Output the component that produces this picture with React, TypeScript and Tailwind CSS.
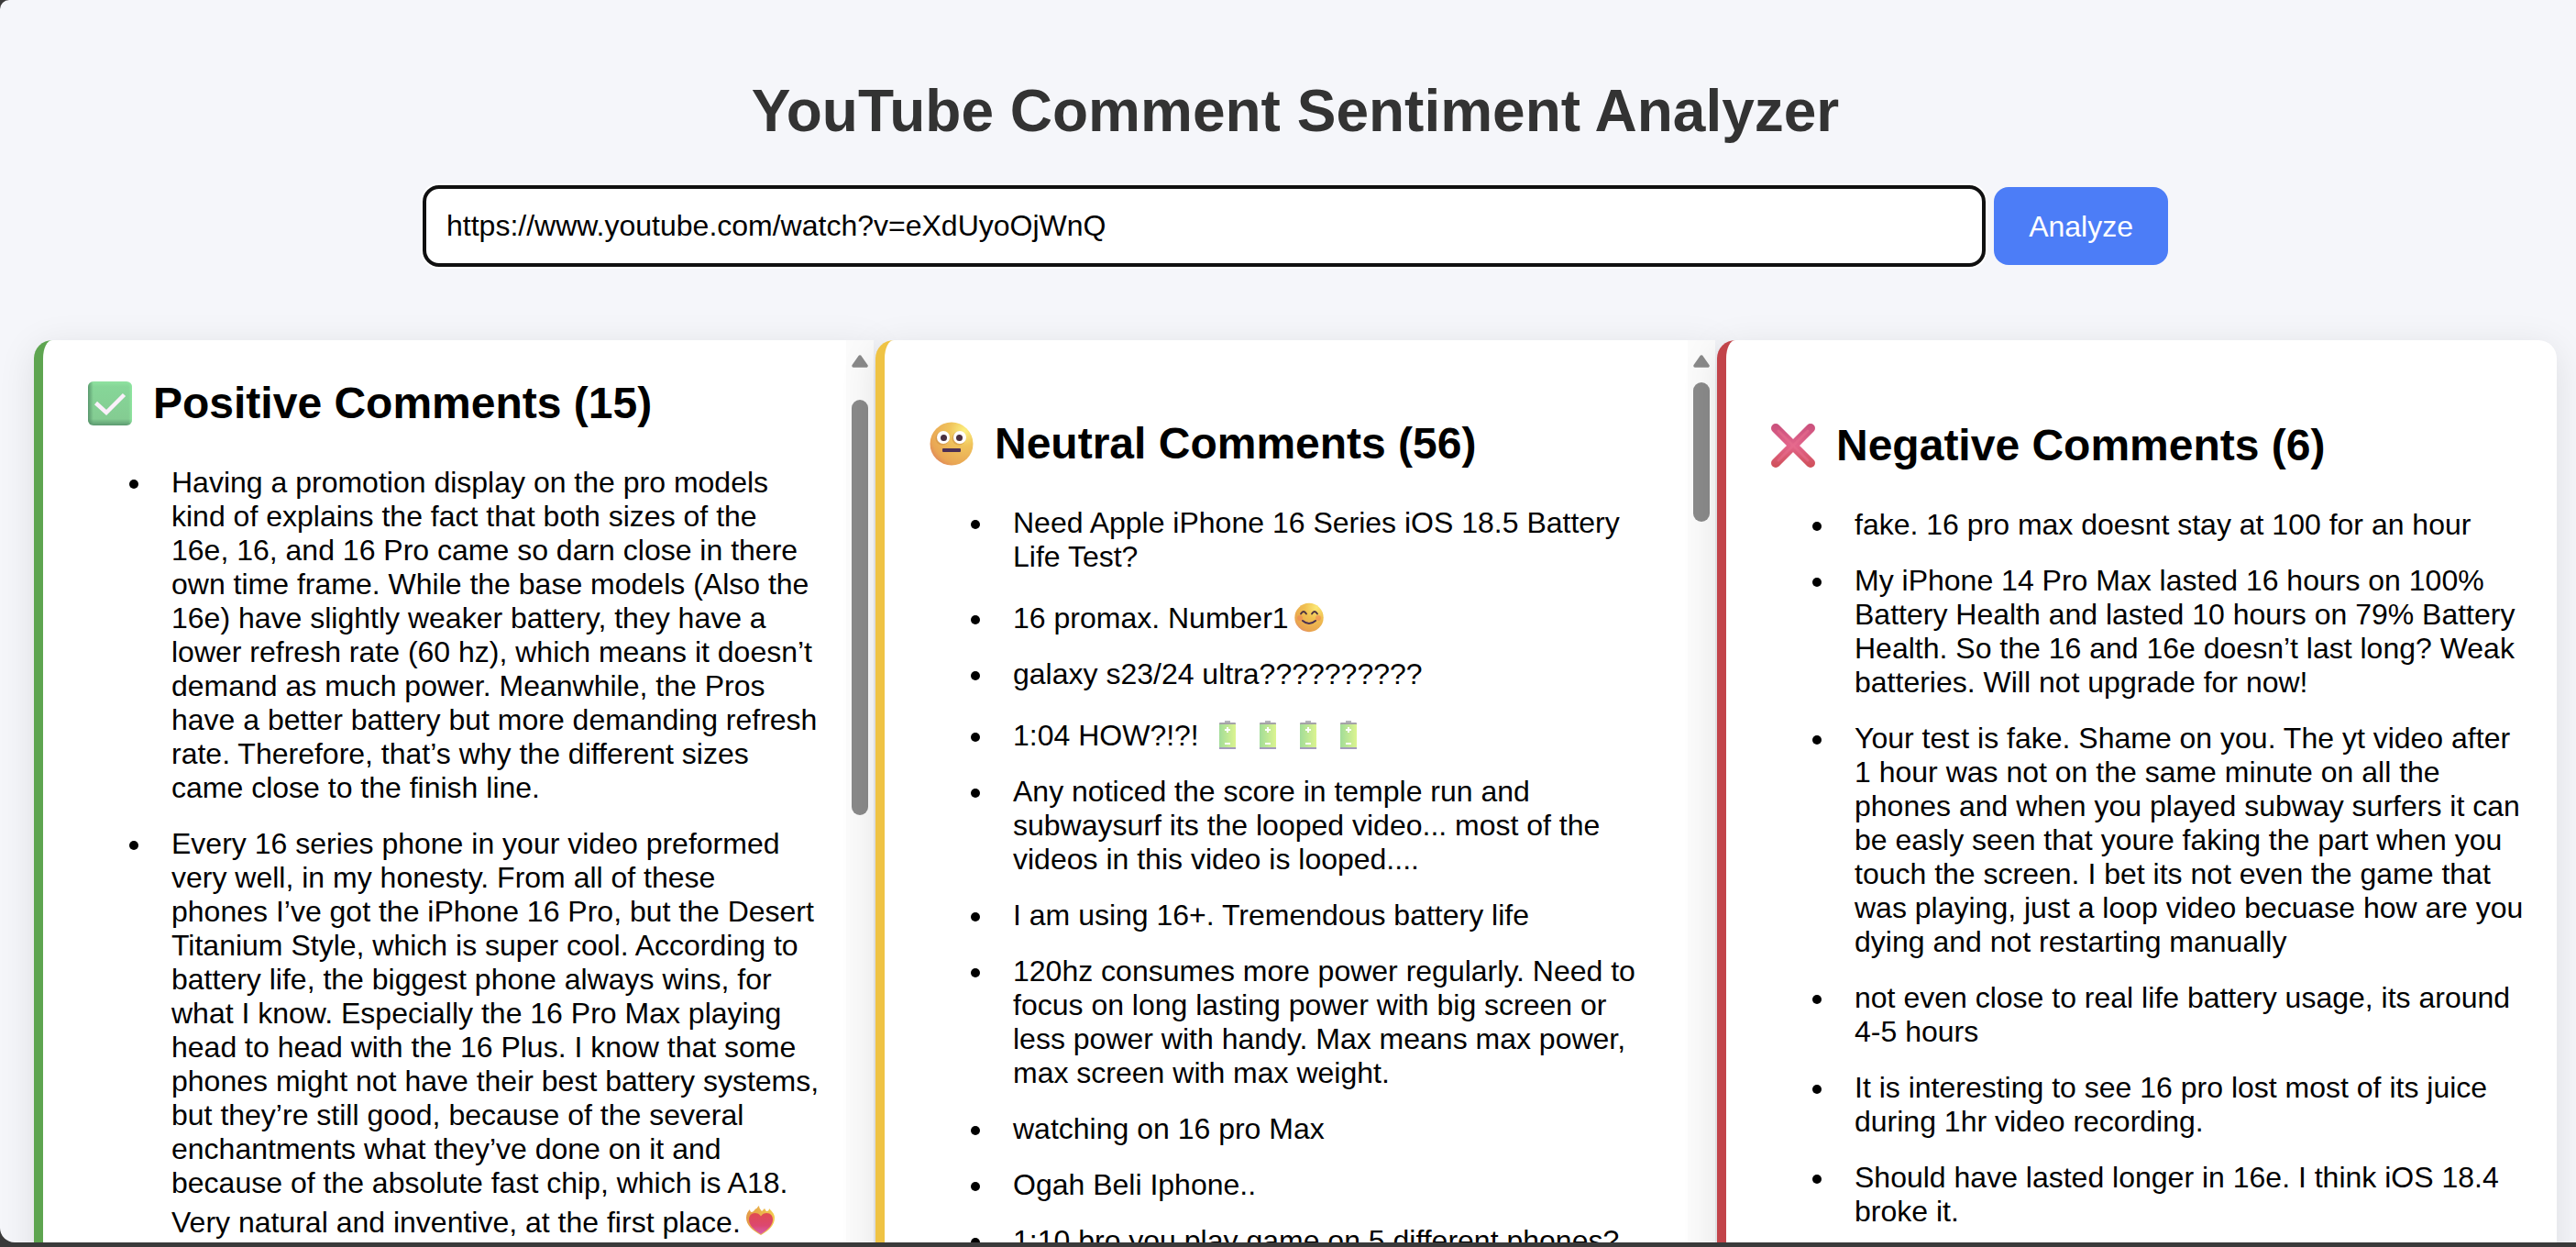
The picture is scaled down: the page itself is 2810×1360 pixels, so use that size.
import React, { useState } from "react";

const EMOJI_CELL = "inline-block w-[44px] h-[41px] align-[-6px]";

function CheckIcon() {
  return (
    <svg viewBox="0 0 48 48" className="h-12 w-12" aria-hidden="true">
      <defs>
        <linearGradient id="check-v" x1="0" y1="0" x2="0" y2="1">
          <stop offset="0" stopColor="#8fe3a0" />
          <stop offset="0.12" stopColor="#86d698" />
          <stop offset="0.85" stopColor="#84cc92" />
          <stop offset="1" stopColor="#5c9a70" />
        </linearGradient>
        <linearGradient id="check-h" x1="0" y1="0" x2="1" y2="0">
          <stop offset="0" stopColor="#4f8a64" stopOpacity="0.8" />
          <stop offset="0.12" stopColor="#4f8a64" stopOpacity="0" />
          <stop offset="0.92" stopColor="#93efa4" stopOpacity="0" />
          <stop offset="1" stopColor="#93efa4" stopOpacity="0.7" />
        </linearGradient>
      </defs>
      <rect width="48" height="48" rx="6" fill="url(#check-v)" />
      <rect width="48" height="48" rx="6" fill="url(#check-h)" />
      <path d="M8.5 23.5 20 34 39.5 14.5" fill="none" stroke="#fbf0fb" strokeWidth="4.5" />
    </svg>
  );
}

function NeutralIcon() {
  return (
    <svg viewBox="0 0 48 48" className="h-12 w-12" aria-hidden="true">
      <defs>
        <radialGradient id="face" cx="0.8" cy="0.2" r="1">
          <stop offset="0" stopColor="#fcf080" />
          <stop offset="0.35" stopColor="#f0c45c" />
          <stop offset="0.8" stopColor="#e9a654" />
          <stop offset="1" stopColor="#dc7c5c" />
        </radialGradient>
      </defs>
      <circle cx="24" cy="24" r="23.5" fill="url(#face)" />
      <circle cx="14" cy="18" r="7.5" fill="#c98a44" opacity="0.5" />
      <circle cx="32" cy="18" r="7.5" fill="#c98a44" opacity="0.5" />
      <circle cx="15" cy="17" r="7" fill="#fff" />
      <circle cx="33" cy="17" r="7" fill="#fff" />
      <circle cx="15.5" cy="17.5" r="3.5" fill="#4a3040" />
      <circle cx="32.5" cy="17.5" r="3.5" fill="#4a3040" />
      <rect x="14" y="29" width="20" height="4" rx="1" fill="#4b2f55" />
    </svg>
  );
}

function CrossIcon() {
  return (
    <svg viewBox="0 0 48 48" className="h-12 w-12" aria-hidden="true">
      <defs>
        <linearGradient id="cross" x1="0" y1="0" x2="0" y2="48" gradientUnits="userSpaceOnUse">
          <stop offset="0" stopColor="#c9507c" />
          <stop offset="0.5" stopColor="#e2648a" />
          <stop offset="1" stopColor="#cf4f58" />
        </linearGradient>
      </defs>
      <path d="M5 5 43 43M43 5 5 43" stroke="url(#cross)" strokeWidth="10" strokeLinecap="round" />
      <path d="M8 8 40 40M40 8 8 40" stroke="#ea7090" strokeOpacity="0.5" strokeWidth="3" strokeLinecap="round" />
    </svg>
  );
}

function Smile() {
  return (
    <svg viewBox="0 1 44 41" className={EMOJI_CELL} role="img" aria-label="smiling face">
      <defs>
        <radialGradient id="smile" cx="0.75" cy="0.15" r="1">
          <stop offset="0" stopColor="#fbe876" />
          <stop offset="0.4" stopColor="#f0c050" />
          <stop offset="0.85" stopColor="#e9a44f" />
          <stop offset="1" stopColor="#dd8080" />
        </radialGradient>
      </defs>
      <circle cx="22" cy="24.5" r="15.7" fill="url(#smile)" />
      <circle cx="12" cy="25" r="3" fill="#ee7a55" opacity="0.5" />
      <circle cx="32" cy="25" r="3" fill="#ee7a55" opacity="0.5" />
      <path d="M13 20.5q3-5 6 0M25 20.5q3-5 6 0" fill="none" stroke="#4a3040" strokeWidth="1.8" strokeLinecap="round" />
      <path d="M15 28q7 6 14 0" fill="none" stroke="#4a3050" strokeWidth="2" strokeLinecap="round" />
    </svg>
  );
}

function Battery() {
  return (
    <svg viewBox="0 1 44 41" className={EMOJI_CELL} role="img" aria-label="battery">
      <defs>
        <linearGradient id="cell" x1="0" y1="0" x2="1" y2="0">
          <stop offset="0" stopColor="#a2dc98" />
          <stop offset="1" stopColor="#dcf490" />
        </linearGradient>
      </defs>
      <rect x="19" y="9" width="6" height="3" fill="#b4b4ba" />
      <rect x="13" y="11" width="18" height="3" rx="1" fill="#a4a2a8" />
      <rect x="13" y="13" width="18" height="25" fill="url(#cell)" />
      <rect x="13" y="38" width="18" height="2" fill="#a49cbc" />
      <path d="M19 19h6M22 16v6M19 34h6" stroke="#fff" strokeWidth="2" />
    </svg>
  );
}

function FireHeart() {
  return (
    <svg viewBox="0 1 44 41" className={EMOJI_CELL} role="img" aria-label="heart on fire">
      <defs>
        <linearGradient id="flame" x1="0" y1="0" x2="1" y2="0">
          <stop offset="0" stopColor="#e39a48" />
          <stop offset="1" stopColor="#f2cc50" />
        </linearGradient>
        <linearGradient id="heart" x1="0" y1="0" x2="0" y2="1">
          <stop offset="0" stopColor="#e04a50" />
          <stop offset="0.6" stopColor="#dc4870" />
          <stop offset="1" stopColor="#d860b0" />
        </linearGradient>
      </defs>
      <path
        d="M22 39C13 34 6 28 6 20c0-4 2-7 4-9 0 2 1 3 2 3 2 0 3-3 5-4 1 0 1-2 3-3 0 3 2 4 3 6l3-3c1 1 1 2 2 3 2 0 3-1 3-3 3 3 6 6 6 10 0 8-6 14-15 19Z"
        fill="url(#flame)"
      />
      <path
        d="M22 38C14 33 9 28 9 22c0-4 2.5-7 6.5-7 3 0 5 1 6.5 3.5C23.5 16 25.5 15 28.5 15c4 0 6.5 3 6.5 7 0 6-5 11-13 16Z"
        fill="url(#heart)"
      />
    </svg>
  );
}

const positive: React.ReactNode[] = [
  <>
    Having a promotion display on the pro models kind of explains the fact that both sizes of the
    <br />
    16e, 16, and 16 Pro came so darn close in there own time frame. While the base models (Also the 16e) have slightly
    weaker battery, they have a lower refresh rate (60 hz), which means it doesn’t demand as much power. Meanwhile, the
    Pros have a better battery but more demanding refresh rate. Therefore, that’s why the different sizes came close to
    the finish line.
  </>,
  <>
    Every 16 series phone in your video preformed very well, in my honesty. From all of these
    <br />
    phones I’ve got the iPhone 16 Pro, but the Desert Titanium Style, which is super cool. According to battery life,
    the biggest phone always wins, for what I know. Especially the 16 Pro Max playing head to head with the 16 Plus. I
    know that some phones might not have their best battery systems, but they’re still good, because of the several
    enchantments what they’ve done on it and because of the absolute fast chip, which is A18. Very natural and
    inventive, at the first place.
    <FireHeart />
  </>,
];

const neutral: React.ReactNode[] = [
  "Need Apple iPhone 16 Series iOS 18.5 Battery Life Test?",
  <>
    16 promax. Number1
    <Smile />
  </>,
  "galaxy s23/24 ultra??????????",
  <>
    1:04 HOW?!?! <Battery />
    <Battery />
    <Battery />
    <Battery />
  </>,
  "Any noticed the score in temple run and subwaysurf its the looped video... most of the videos in this video is looped....",
  "I am using 16+. Tremendous battery life",
  "120hz consumes more power regularly. Need to focus on long lasting power with big screen or less power with handy. Max means max power, max screen with max weight.",
  "watching on 16 pro Max",
  "Ogah Beli Iphone..",
  "1:10 bro you play game on 5 different phones?",
];

const negative: React.ReactNode[] = [
  "fake. 16 pro max doesnt stay at 100 for an hour",
  "My iPhone 14 Pro Max lasted 16 hours on 100% Battery Health and lasted 10 hours on 79% Battery Health. So the 16 and 16e doesn’t last long? Weak batteries. Will not upgrade for now!",
  "Your test is fake. Shame on you. The yt video after 1 hour was not on the same minute on all the phones and when you played subway surfers it can be easly seen that youre faking the part when you touch the screen. I bet its not even the game that was playing, just a loop video becuase how are you dying and not restarting manually",
  "not even close to real life battery usage, its around 4-5 hours",
  "It is interesting to see 16 pro lost most of its juice during 1hr video recording.",
  "Should have lasted longer in 16e. I think iOS 18.4 broke it.",
];

function ScrollBar({ thumb }: { thumb: string }) {
  return (
    <div className="flex w-[30px] shrink-0 flex-col items-center bg-[#fbfbfb] pt-4" aria-hidden="true">
      <svg viewBox="0 0 18 14" className="h-[14px] w-[18px] shrink-0">
        <path d="M9 2 16 12H2Z" fill="#8a8a8a" stroke="#8a8a8a" strokeWidth="3.5" strokeLinejoin="round" />
      </svg>
      <div className={`w-[18px] shrink-0 rounded-full bg-[#8a8a8a] ${thumb}`} />
    </div>
  );
}

interface CardProps {
  title: string;
  icon: React.ReactNode;
  items: React.ReactNode[];
  frame: string;
  inset: string;
  thumb?: string;
}

function CommentCard({ title, icon, items, frame, inset, thumb }: CardProps) {
  return (
    <section
      className={`flex min-h-0 overflow-hidden border-l-[10px] bg-white shadow-[0_8px_40px_rgba(0,0,0,0.1)] ${frame}`}
    >
      <div className={`min-w-0 flex-1 pl-10 ${inset}`}>
        <h2 className="flex items-center text-[48px] leading-[64px] font-bold">
          <span className="mr-3.5 flex w-[66px] justify-center">{icon}</span>
          {title}
        </h2>
        <ul className="mt-9 list-disc space-y-6 pl-20 text-[32px] leading-[37px]">
          {items.map((item, i) => (
            <li key={i} className="pl-5">
              {item}
            </li>
          ))}
        </ul>
      </div>
      {thumb && <ScrollBar thumb={thumb} />}
    </section>
  );
}

export default function App() {
  const [url, setUrl] = useState("https://www.youtube.com/watch?v=eXdUyoOjWnQ");
  return (
    <div className="h-screen bg-[#3a3a3a] pb-[5px] font-['Liberation_Sans',Arial,sans-serif] text-black">
      <main className="flex h-full flex-col overflow-hidden rounded-tl-[10px] rounded-bl-[16px] bg-[#f5f6fa] pr-[21px] pl-[37px]">
        <h1 className="mt-[84px] text-center text-[64px] leading-[74px] font-bold text-[#333]">
          YouTube Comment Sentiment Analyzer
        </h1>
        <form
          className="mx-auto mt-11 flex w-full max-w-[1904px] items-center justify-center gap-[9px]"
          onSubmit={(e) => e.preventDefault()}
        >
          <input
            type="text"
            aria-label="YouTube video URL"
            value={url}
            onChange={(e) => setUrl(e.target.value)}
            className="h-[89px] min-w-0 flex-1 rounded-[18px] border-4 border-[#101010] bg-white px-[22px] text-[32px] ring-2 ring-white outline-none"
          />
          <button type="submit" className="h-[85px] rounded-[16px] bg-[#4c7df7] px-[38px] text-[32px] text-white">
            Analyze
          </button>
        </form>
        <div className="mt-20 -mb-10 grid min-h-0 flex-1 grid-cols-3 gap-0.5">
          <CommentCard
            title="Positive Comments (15)"
            icon={<CheckIcon />}
            items={positive}
            frame="rounded-tl-[20px] border-[#5ea550]"
            inset="pt-[37px] pr-6"
            thumb="mt-[35px] h-[453px]"
          />
          <CommentCard
            title="Neutral Comments (56)"
            icon={<NeutralIcon />}
            items={neutral}
            frame="rounded-tl-[20px] border-[#efc344]"
            inset="pt-[81px] pr-6"
            thumb="mt-4 h-[152px]"
          />
          <CommentCard
            title="Negative Comments (6)"
            icon={<CrossIcon />}
            items={negative}
            frame="rounded-t-[20px] border-[#c2444a]"
            inset="pt-[83px] pr-8"
          />
        </div>
      </main>
    </div>
  );
}
